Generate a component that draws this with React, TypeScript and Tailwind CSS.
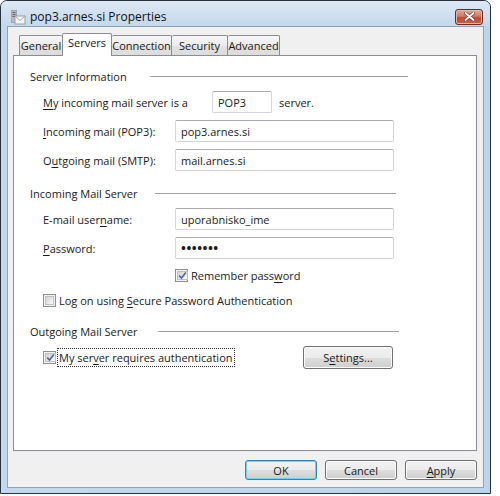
import React from "react";

function U({ children }: { children: React.ReactNode }) {
  return <span className="underline underline-offset-[2px] decoration-[1px]">{children}</span>;
}

function Checkbox({ checked }: { checked?: boolean }) {
  return (
    <span className="flex w-[13px] h-[13px] shrink-0 border border-[#8e8f8f] bg-[#f4f4f4] p-[1px]">
      <span className="flex flex-1 items-center justify-center border border-[#c0c0c0] bg-gradient-to-br from-[#d2d2d2] to-[#fafafa]">
        {checked && (
          <svg width="9" height="9" viewBox="0 0 9 9">
            <path d="M1.2 4.6 L3.5 7 L7.8 1.4" fill="none" stroke="#4a64a6" strokeWidth="1.6" />
          </svg>
        )}
      </span>
    </span>
  );
}

function Field({ value, w = "w-[219px]", dots }: { value: string; w?: string; dots?: boolean }) {
  return (
    <div
      className={`${w} h-[22px] flex items-center pl-[5px] bg-white border border-[#d3d6dc] border-t-[#abadb3] rounded-[2px] ${
        dots ? "text-[13px] tracking-[0.5px] font-bold" : ""
      }`}
    >
      {value}
    </div>
  );
}

function Button({
  children,
  w,
  h = "h-[20px]",
  primary,
}: {
  children: React.ReactNode;
  w: string;
  h?: string;
  primary?: boolean;
}) {
  return (
    <div
      className={`${w} ${h} shrink-0 flex items-center justify-center rounded-[3px] border ${
        primary
          ? "border-[#3c7fb1] shadow-[inset_0_0_0_1px_#6fd0f7]"
          : "border-[#707070] shadow-[inset_0_0_0_1px_#fcfcfc]"
      } bg-[linear-gradient(to_bottom,#f2f2f2_0%,#ebebeb_50%,#dddddd_51%,#cfcfcf_100%)]`}
    >
      {children}
    </div>
  );
}

function Tab({
  label,
  w,
  selected,
  left,
  right = true,
}: {
  label: string;
  w: string;
  selected?: boolean;
  left?: boolean;
  right?: boolean;
}) {
  if (selected)
    return (
      <div
        className={`${w} h-[23px] flex items-start justify-center pt-[3px] bg-white border-t border-l border-r border-[#898c95] rounded-t-[2px]`}
      >
        {label}
      </div>
    );
  return (
    <div
      className={`${w} h-[20px] mb-[1px] flex items-center justify-center border-t border-[#898c95] ${
        left ? "border-l" : ""
      } ${right ? "border-r" : ""} rounded-t-[2px] bg-[linear-gradient(to_bottom,#f6f6f6_0%,#ececec_50%,#e2e2e2_51%,#dcdcdc_100%)]`}
    >
      {label}
    </div>
  );
}

function Header({ text, tw, lw }: { text: string; tw: string; lw: string }) {
  return (
    <div className="flex items-center h-[16px]">
      <span className={tw}>{text}</span>
      <span className={`${lw} h-px bg-[#a0a0a0]`} />
    </div>
  );
}

export default function App() {
  return (
    <div className="w-[500px] h-[496px] bg-white font-['Open_Sans','Noto_Sans',sans-serif] text-[11px] text-[#1a1a1a] leading-none">
      <div className="w-[491px] h-[494px] flex flex-col border border-[#27323f] rounded-t-[7px] overflow-hidden bg-[linear-gradient(to_right,#c3d8ee,#bcd4ec)]">
        {/* title bar */}
        <div className="h-[25px] shrink-0 flex items-center pt-[6px] pl-[9px] pr-[7px] bg-[linear-gradient(to_bottom,#dde8f4,#c4d8ec)]">
          <svg width="16" height="16" viewBox="0 0 16 16" className="shrink-0">
            <rect x="1" y="1" width="6" height="13" fill="#8d9298" />
            <rect x="1.5" y="1.5" width="5" height="12" fill="#b9bdc2" />
            <rect x="2.5" y="3" width="3" height="1" fill="#5c6268" />
            <rect x="2.5" y="5" width="3" height="1" fill="#5c6268" />
            <rect x="2.5" y="7" width="3" height="1" fill="#5c6268" />
            <rect x="5" y="7" width="10" height="8" fill="#f4f4f4" stroke="#9a9ea3" strokeWidth="1" />
            <path d="M5.5 7.5 L10 11.5 L14.5 7.5" fill="none" stroke="#a5a9ae" strokeWidth="1" />
          </svg>
          <span className="ml-[4px] text-[12px] text-[#111]">pop3.arnes.si Properties</span>
          <div className="ml-auto w-[28px] h-[16px] flex items-center justify-center rounded-[3px] border border-[#6b2a1c] bg-[linear-gradient(to_bottom,#e8a898_0%,#d37865_45%,#c24a30_55%,#c9604a_100%)] shadow-[inset_0_0_0_1px_#e9b3a6]">
            <svg width="11" height="9" viewBox="0 0 11 9">
              <path d="M1.5 1 L9.5 8 M9.5 1 L1.5 8" stroke="#6b3b32" strokeWidth="3.2" strokeLinecap="round" />
              <path d="M1.5 1 L9.5 8 M9.5 1 L1.5 8" stroke="#ffffff" strokeWidth="1.8" strokeLinecap="round" />
            </svg>
          </div>
        </div>

        {/* client area */}
        <div className="flex-1 flex px-[6px] pb-[5px]">
          <div className="flex-1 flex flex-col border border-[#8ea3bb] bg-[#f0f0f0] pl-[5px] pr-[6px] pt-[6px]">
            {/* tabs */}
            <div className="relative z-10 flex items-end pl-[6px] -mb-[1px]">
              <Tab label="General" w="w-[43px]" left right={false} />
              <Tab label="Servers" w="w-[50px]" selected />
              <Tab label="Connection" w="w-[60px]" />
              <Tab label="Security" w="w-[56px]" />
              <Tab label="Advanced" w="w-[52px]" />
            </div>

            {/* panel */}
            <div className="h-[396px] border border-[#898c95] bg-white flex flex-col pl-[16px]">
              <div className="mt-[12px]">
                <Header text="Server Information" tw="w-[120px]" lw="w-[258px]" />
              </div>

              <div className="ml-[13px] flex flex-col">
                <div className="mt-[7px] flex items-center">
                  <span className="w-[169px]">
                    <U>M</U>y incoming mail server is a
                  </span>
                  <Field value="POP3" w="w-[60px]" />
                  <span className="ml-[7px]">server.</span>
                </div>
                <div className="mt-[7px] flex items-center">
                  <span className="w-[132px]">
                    <U>I</U>ncoming mail (POP3):
                  </span>
                  <Field value="pop3.arnes.si" />
                </div>
                <div className="mt-[7px] flex items-center">
                  <span className="w-[132px]">
                    O<U>u</U>tgoing mail (SMTP):
                  </span>
                  <Field value="mail.arnes.si" />
                </div>
              </div>

              <div className="mt-[14px]">
                <Header text="Incoming Mail Server" tw="w-[125px]" lw="w-[241px]" />
              </div>

              <div className="ml-[13px] flex flex-col">
                <div className="mt-[7px] flex items-center">
                  <span className="w-[132px]">
                    E-mail user<U>n</U>ame:
                  </span>
                  <Field value="uporabnisko_ime" />
                </div>
                <div className="mt-[7px] flex items-center">
                  <span className="w-[132px]">
                    <U>P</U>assword:
                  </span>
                  <Field value="•••••••" dots />
                </div>
                <div className="mt-[8px] h-[16px] flex items-center pl-[132px]">
                  <Checkbox checked />
                  <span className="ml-[3px]">
                    Remember pass<U>w</U>ord
                  </span>
                </div>
                <div className="mt-[9px] h-[16px] flex items-center">
                  <Checkbox />
                  <span className="ml-[3px]">
                    Log on using <U>S</U>ecure Password Authentication
                  </span>
                </div>
              </div>

              <div className="mt-[15px]">
                <Header text="Outgoing Mail Server" tw="w-[128px]" lw="w-[241px]" />
              </div>

              <div className="ml-[13px] mt-[7px] h-[23px] flex items-center">
                <div className="w-[260px] flex items-center">
                  <Checkbox checked />
                  <span className="ml-[1px] px-[2px] py-[4px] outline outline-1 outline-dotted outline-[#333] -outline-offset-1">
                    My ser<U>v</U>er requires authentication
                  </span>
                </div>
                <Button w="w-[90px]" h="h-[23px]">
                  S<U>e</U>ttings...
                </Button>
              </div>
            </div>

            {/* buttons */}
            <div className="mt-[9px] flex justify-end gap-[8px]">
              <Button w="w-[72px]" primary>
                OK
              </Button>
              <Button w="w-[72px]">Cancel</Button>
              <Button w="w-[72px]">
                <U>A</U>pply
              </Button>
            </div>
          </div>
        </div>
      </div>
    </div>
  );
}
